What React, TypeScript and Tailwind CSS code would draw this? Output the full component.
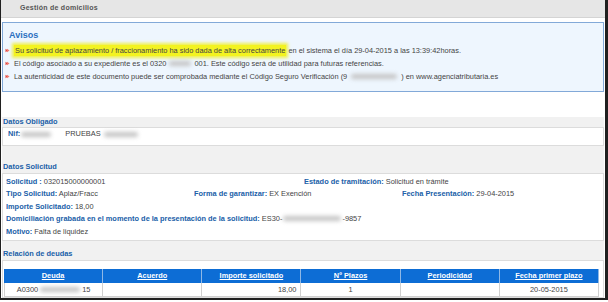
import React from "react";

const Blur = ({ className }: { className: string }) => (
  <span className={"inline-block align-middle h-[5px] rounded-full bg-[#c4c4c4] blur-[2px] " + className} />
);

const Bullet = () => (
  <span className="inline-flex w-[10px] justify-start pl-[1px] items-center">
    <svg width="5" height="5" viewBox="0 0 5 5">
      <path d="M0.5 0.8 L3 2.5 L0.5 4.2 Z" fill="#e2463f" />
      <path d="M2 0.8 L4.5 2.5 L2 4.2 Z" fill="#f07a6e" />
    </svg>
  </span>
);

const L = ({ children }: { children: React.ReactNode }) => (
  <span className="font-bold text-[#2060a8]">{children}</span>
);

export default function App() {
  return (
    <div className="w-[608px] h-[302px] bg-white overflow-hidden font-['Liberation_Sans',Arial,sans-serif] text-[7.4px] text-[#444]">
      <div className="h-[300px] flex flex-col border-l border-r-[3px] border-b-2 border-[#202020]">
        <div className="h-[18px] shrink-0 bg-[#e6e6e6] border-b border-[#d4d4d4] flex items-center pl-[19px] text-[7px] font-bold text-[#555] tracking-[0.25px]">
          Gestión de domicilios
        </div>

        <div className="mt-[4px] mx-[1px] h-[70px] shrink-0 border border-[#82a9d8] bg-[#eef6fe] pt-[6px]">
          <div className="h-[12px] leading-[12px] pl-[6px] text-[9px] font-bold text-[#2c70bf]">Avisos</div>
          <div className="mt-[3px] pl-[1px]">
            <div className="h-[13px] flex items-center whitespace-nowrap">
              <Bullet />
              <span className="bg-[#f3f320] shadow-[0_0_3px_2px_#f0f04a] px-[1px] leading-[11px]">
                Su solicitud de aplazamiento / fraccionamiento ha sido dada de alta correctamente
              </span>
              <span>&nbsp;en el sistema el día 29-04-2015 a las 13:39:42horas.</span>
            </div>
            <div className="h-[13px] flex items-center whitespace-nowrap">
              <Bullet />
              <span>El código asociado a su expediente es el 0320</span>
              <Blur className="w-[22px] mx-[3px]" />
              <span>001. Este código será de utilidad para futuras referencias.</span>
            </div>
            <div className="h-[13px] flex items-center whitespace-nowrap">
              <Bullet />
              <span>La autenticidad de este documento puede ser comprobada mediante el Código Seguro Verificación (9</span>
              <Blur className="w-[46px] mx-[4px]" />
              <span>) en www.agenciatributaria.es</span>
            </div>
          </div>
        </div>

        <div className="mt-[25px] mx-[1px] flex-1 bg-[#f1f1f1] flex flex-col">
          <div className="h-[10px] leading-[10px] pl-[1px] font-bold text-[#2060a8]">Datos Obligado</div>
          <div className="h-[19px] border border-[#dcdcdc] bg-white pl-[5px] pt-[1px]">
            <div className="h-[10px] flex items-center whitespace-nowrap">
              <L>Nif:</L>
              <Blur className="w-[30px] ml-[1px]" />
              <span className="ml-[14px]">PRUEBAS</span>
              <Blur className="w-[34px] ml-[3px]" />
            </div>
          </div>

          <div className="mt-[15px] h-[12px] leading-[12px] pl-[1px] font-bold text-[#2060a8]">Datos Solicitud</div>
          <div className="h-[68px] border border-[#dcdcdc] bg-white pl-[3px] pt-[1px]">
            <div className="h-[12.5px] flex items-center whitespace-nowrap">
              <span className="w-[298px]"><L>Solicitud :</L> 032015000000001</span>
              <span><L>Estado de tramitación:</L> Solicitud en trámite</span>
            </div>
            <div className="h-[12.5px] flex items-center whitespace-nowrap">
              <span className="w-[188px]"><L>Tipo Solicitud:</L> Aplaz/Fracc</span>
              <span className="w-[208px]"><L>Forma de garantizar:</L> EX Exención</span>
              <span><L>Fecha Presentación:</L> 29-04-2015</span>
            </div>
            <div className="h-[12.5px] flex items-center whitespace-nowrap">
              <span><L>Importe Solicitado:</L> 18,00</span>
            </div>
            <div className="h-[12.5px] flex items-center whitespace-nowrap">
              <L>Domiciliación grabada en el momento de la presentación de la solicitud:</L>
              <span>&nbsp;ES30-</span>
              <Blur className="w-[58px] mx-[1px]" />
              <span>-9857</span>
            </div>
            <div className="h-[12.5px] flex items-center whitespace-nowrap">
              <span><L>Motivo:</L> Falta de liquidez</span>
            </div>
          </div>

          <div className="mt-[7px] h-[12px] leading-[12px] pl-[1px] font-bold text-[#2060a8]">Relación de deudas</div>
          <div className="flex-1 border border-[#dcdcdc] bg-white px-[1px] pt-[8px]">
            <div className="grid grid-cols-6 w-[595px]">
              {["Deuda", "Acuerdo", "Importe solicitado", "Nº Plazos", "Periodicidad", "Fecha primer plazo"].map((h) => (
                <div key={h} className="h-[14px] bg-[#0d6dd5] border-r border-[#8fb8e6] last:border-r-0 flex items-center justify-center text-white font-bold underline">
                  {h}
                </div>
              ))}
              <div className="h-[14px] border-l border-b border-r border-[#d0d0d0] flex items-center justify-center whitespace-nowrap">
                A0300<Blur className="w-[40px] mx-[2px]" />15
              </div>
              <div className="h-[14px] border-b border-r border-[#d0d0d0]" />
              <div className="h-[14px] border-b border-r border-[#d0d0d0] flex items-center justify-end pr-[4px]">18,00</div>
              <div className="h-[14px] border-b border-r border-[#d0d0d0] flex items-center justify-center">1</div>
              <div className="h-[14px] border-b border-r border-[#d0d0d0]" />
              <div className="h-[14px] border-b border-r border-[#d0d0d0] flex items-center justify-center">20-05-2015</div>
            </div>
          </div>
        </div>
      </div>
    </div>
  );
}
